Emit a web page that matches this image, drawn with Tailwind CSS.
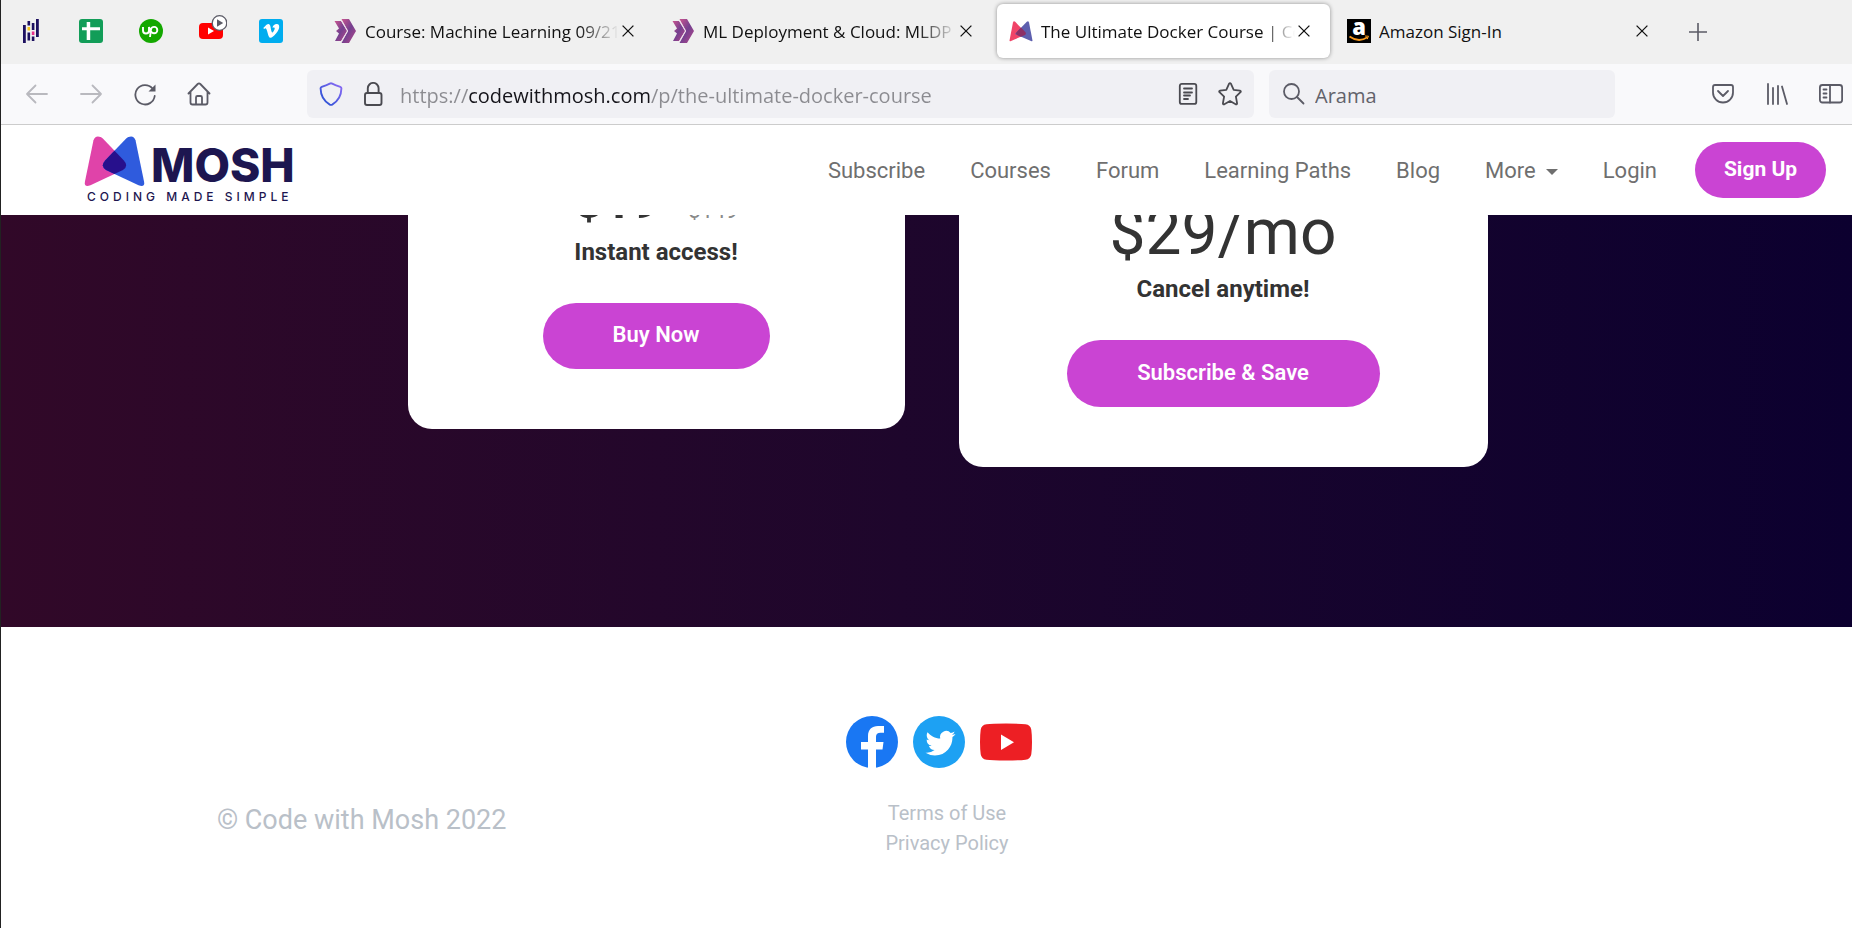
<!DOCTYPE html>
<html lang="en">
<head>
<meta charset="utf-8">
<title>The Ultimate Docker Course | Code with Mosh</title>
<script src="https://cdn.jsdelivr.net/npm/@tailwindcss/browser@4"></script>
</head>
<body class="min-h-screen overflow-x-hidden border-l border-[#222] bg-white font-['Roboto',sans-serif]">

<!-- shared symbols -->
<svg class="absolute size-0" aria-hidden="true">
  <linearGradient id="cg" x1="0" y1="0" x2="1" y2="1"><stop offset="0" stop-color="#c9558f"/><stop offset=".5" stop-color="#74408f"/><stop offset="1" stop-color="#b8478a"/></linearGradient>
  <symbol id="close" viewBox="0 0 12 12"><path d="M.6.6l10.800 10.800M11.400.6L.6 11.400" fill="none" stroke="#111" stroke-width="1.300"/></symbol>
  <symbol id="chevrons" viewBox="0 0 24 24">
    <path d="M8.500 0H16l7 12-7 12H8.500l6.500-12z" fill="url(#cg)"/>
    <path d="M1.500 2H8l6 10-6 10H2l4-7.500L3 12l3-2.500z" fill="url(#cg)"/>
    <path d="M8.300 1.500L14.700 12 8.300 22.500" fill="none" stroke="#efd9e8" stroke-width=".9"/>
  </symbol>
</svg>

<!-- tab strip -->
<div class="flex h-16 items-start bg-[#f0f0f0] pt-1 font-['Open_Sans',sans-serif] text-[17px] text-[#111]">
  <div class="mr-5 flex h-[54px] shrink-0 items-center">
    <button class="flex w-15 justify-center" aria-label="pandas">
      <svg class="size-6" viewBox="0 0 24 24"><g fill="#1d1060"><path d="M4 6h2.800v18H4zM17 0h2.800v18H17zM8.500 2h2.600v4.500H8.500zM8.500 13.500h2.600v8H8.500zM12.800 4h2.600v7h-2.600zM12.800 17.500h2.600V22h-2.600z"/></g><path fill="#f5c518" d="M8.500 8h2.600v3.500H8.500z"/><path fill="#e6308a" d="M12.800 12.500h2.600V16h-2.600z"/></svg>
    </button>
    <button class="flex w-15 justify-center" aria-label="Sheets">
      <svg class="size-6" viewBox="0 0 24 24"><rect width="24" height="24" rx="3" fill="#129d58"/><path d="M3 8.200h18v3H3zM7.700 3h3.500v18H7.700z" fill="#fff"/></svg>
    </button>
    <button class="flex w-15 justify-center" aria-label="Upwork">
      <svg class="size-6" viewBox="0 0 24 24"><circle cx="12" cy="12" r="12" fill="#14a800"/><path d="M4 8v3.500a3 3 0 0 0 6 0V8c.8 3 2.400 6 5 6.300a3.200 3.200 0 1 0-3.100-3.300L11 18" fill="none" stroke="#fff" stroke-width="1.900"/></svg>
    </button>
    <button class="flex w-15 justify-center" aria-label="YouTube, playing">
      <svg class="size-8" viewBox="0 0 32 32"><rect x="4" y="8" width="24" height="16" rx="4" fill="#f00"/><path d="M13 12.500v7l6-3.500z" fill="#fff"/><circle cx="24.500" cy="8" r="7.300" fill="#fff" stroke="#5b5b66" stroke-width="1.300"/><path d="M22 4.300v7.400l6.200-3.700z" fill="#5b5b66"/></svg>
    </button>
    <button class="flex w-15 justify-center" aria-label="Vimeo">
      <svg class="size-6" viewBox="0 0 24 24"><rect width="24" height="24" rx="3" fill="#00adef"/><path d="M4.300 8.900l.8 1c.7-.5 1.100-.7 1.400-.7.600 0 1 .9 1.600 2.900l1.100 3.800c.6 1.900 1.300 2.800 2.300 2.800 1.500 0 3.400-1.500 5.500-4.200 2.100-2.700 3.100-4.800 3.200-6.300.1-2.100-.7-3.100-2.300-3.200-2.200-.1-3.700 1.200-4.500 3.700.4-.2.800-.3 1.200-.3.800 0 1.200.5 1.100 1.300-.1.500-.4 1.200-1 2.200-.700 1-1.100 1.500-1.400 1.500-.5 0-.8-.8-1.200-2.400l-.6-3.300c-.400-1.900-1.100-2.700-2.300-2.600-.7.1-1.600.6-2.900 1.800z" fill="#fff"/></svg>
    </button>
  </div>

  <div class="flex min-w-0 gap-[5px]" role="tablist">
    <div role="tab" class="flex h-[54px] w-[333px] items-center pr-5 pl-3">
      <svg class="size-6 shrink-0"><use href="#chevrons"/></svg>
      <span class="mr-[3px] ml-2 flex-1 overflow-hidden pt-px whitespace-nowrap [mask-image:linear-gradient(90deg,#000_calc(100%-40px),transparent)]">Course: Machine Learning 09/21</span>
      <button aria-label="Close tab"><svg class="size-3"><use href="#close"/></svg></button>
    </div>
    <div role="tab" class="flex h-[54px] w-[333px] items-center pr-5 pl-3">
      <svg class="size-6 shrink-0"><use href="#chevrons"/></svg>
      <span class="mr-[3px] ml-2 flex-1 overflow-hidden pt-px whitespace-nowrap [mask-image:linear-gradient(90deg,#000_calc(100%-40px),transparent)]">ML Deployment &amp; Cloud: MLDP</span>
      <button aria-label="Close tab"><svg class="size-3"><use href="#close"/></svg></button>
    </div>
    <div role="tab" aria-selected="true" class="flex h-[54px] w-[333px] items-center rounded-md bg-white pr-5 pl-3 shadow-[0_0_4px_rgba(0,0,0,0.4)]">
      <svg class="size-6 shrink-0" viewBox="0 0 24 24"><path d="M.5 21.500L4 3.500q.6-2 2.200-.7L18 15 2 22q-1.600.6-1.500-.5z" fill="#f04468"/><path d="M23.500 21.500L20 3.500q-.6-2-2.200-.7L6 15l16 7q1.600.6 1.500-.5z" fill="#5d5fae"/><path d="M12 8.500L7.500 13.200q-1 2 .6 2.800L12 17.700l4-1.700q1.500-.8.500-2.800z" fill="#8c2f66"/></svg>
      <span class="mr-[3px] ml-2 flex-1 overflow-hidden pt-px whitespace-nowrap [mask-image:linear-gradient(90deg,#000_calc(100%-32px),transparent)]">The Ultimate Docker Course | Co</span>
      <button aria-label="Close tab"><svg class="size-3"><use href="#close"/></svg></button>
    </div>
    <div role="tab" class="flex h-[54px] w-[333px] items-center pr-5 pl-3">
      <svg class="size-6 shrink-0" viewBox="0 0 24 24"><rect width="24" height="24"/><text x="12" y="16" text-anchor="middle" font-family="Open Sans" font-weight="800" font-size="22" fill="#fff">a</text><path d="M2.500 17.500q9 6.500 18 .8" fill="none" stroke="#f7981d" stroke-width="1.800"/><path d="M18 17l3.500.2-1.300 3" fill="none" stroke="#f7981d"/></svg>
      <span class="mr-[3px] ml-2 flex-1 overflow-hidden pt-px whitespace-nowrap">Amazon Sign-In</span>
      <button aria-label="Close tab"><svg class="size-3"><use href="#close"/></svg></button>
    </div>
  </div>
  <button class="ml-[21px] flex h-14 items-center" aria-label="New tab"><svg class="size-[18px]" viewBox="0 0 18 18"><path d="M9 0v18M0 9h18" stroke="#5b5b66" stroke-width="1.600"/></svg></button>
</div>

<!-- toolbar -->
<div class="flex h-[61px] items-center border-b border-[#ccc] bg-[#f9f9fb] px-[9px] font-['Open_Sans',sans-serif] text-[20px]">
  <button class="flex w-[54px] shrink-0 justify-center" aria-label="Back"><svg class="size-6" viewBox="0 0 24 24" fill="none" stroke="#b9b9be" stroke-width="1.800" stroke-linecap="round" stroke-linejoin="round"><path d="M22 12H2M10.500 3.500L2 12l8.500 8.500"/></svg></button>
  <button class="flex w-[54px] shrink-0 justify-center" aria-label="Forward"><svg class="size-6" viewBox="0 0 24 24" fill="none" stroke="#b9b9be" stroke-width="1.800" stroke-linecap="round" stroke-linejoin="round"><path d="M2 12h20M13.500 3.500L22 12l-8.500 8.500"/></svg></button>
  <button class="flex w-[54px] shrink-0 justify-center" aria-label="Reload"><svg class="size-6" viewBox="0 0 24 24"><path d="M19.500 6.500A9.700 9.700 0 1 0 21.700 14" fill="none" stroke="#5b5b66" stroke-width="1.800" stroke-linecap="round"/><path d="M22.500 2.500v7h-7z" fill="#5b5b66"/></svg></button>
  <button class="flex w-[54px] shrink-0 justify-center" aria-label="Home"><svg class="size-6" viewBox="0 0 24 24" fill="none" stroke="#5b5b66" stroke-width="1.800" stroke-linecap="round" stroke-linejoin="round"><path d="M1.500 11.500L10.700 2q1.300-1.200 2.600 0l9.200 9.500M3.500 10v10.500q0 2 2 2h13q2 0 2-2V10M9 22v-6.500q0-1.500 1.500-1.500h3q1.500 0 1.500 1.500V22"/></svg></button>

  <div class="ml-[81px] flex h-12 min-w-0 flex-1 items-center rounded-md bg-[#f0f0f4] px-3">
    <svg class="size-6 shrink-0" viewBox="0 0 24 24"><linearGradient id="sh" x1="0" y1="1" x2="1" y2="0"><stop offset="0" stop-color="#1f4fd0"/><stop offset="1" stop-color="#8f6bf5"/></linearGradient><path d="M12 1.200q.8 0 4.500 1.900l4.800 1.700q1.200.5 1.100 1.800-.2 10.900-9.200 16-1.200.6-2.400 0-9-5.100-9.200-16-.1-1.300 1.100-1.800l4.800-1.700Q11.200 1.200 12 1.200z" fill="none" stroke="url(#sh)" stroke-width="1.900"/></svg>
    <svg class="ml-[18px] size-6 shrink-0" viewBox="0 0 24 24" fill="none" stroke="#4a4a50" stroke-width="1.900"><rect x="4" y="11" width="16.500" height="12" rx="2"/><path d="M6.800 11V6.300a5.400 5.400 0 0 1 10.800 0V11"/></svg>
    <input aria-label="Address" value="https://codewithmosh.com/p/the-ultimate-docker-course" class="ml-[15px] min-w-0 flex-1 bg-[linear-gradient(90deg,#8b8b90_69px,#15141a_69px,#15141a_250px,#8b8b90_250px)] bg-clip-text pt-[3px] text-transparent outline-none">
    <button aria-label="Reader view"><svg class="size-6" viewBox="0 0 24 24" fill="none" stroke="#4a4a50" stroke-width="1.800" stroke-linecap="round"><rect x="3.800" y="1.900" width="16.500" height="20" rx="2"/><path d="M8 6.500h8M8 10.500h8M8 13.500h6M8 17h4"/></svg></button>
    <button class="ml-[18px]" aria-label="Bookmark"><svg class="size-6" viewBox="0 0 24 24" fill="none" stroke="#4a4a50" stroke-width="1.800" stroke-linejoin="round"><path d="M11 1.800q1-1.300 2 0l2.700 6 6.200.8q1.500.4.600 1.600l-4.600 4.500 1.200 6.600q0 1.500-1.400 1L12 19l-5.700 3.300q-1.400.5-1.400-1l1.200-6.600L1.500 10.200q-.9-1.200.600-1.600l6.200-.8z"/></svg></button>
  </div>

  <div class="ml-[15px] flex h-12 w-[346px] shrink-0 items-center rounded-md bg-[#f0f0f4] px-3">
    <svg class="size-6 shrink-0" viewBox="0 0 24 24" fill="none" stroke="#5b5b66" stroke-width="1.800" stroke-linecap="round"><circle cx="10.500" cy="9.500" r="7.500"/><path d="M16 15l6.500 6.500"/></svg>
    <input aria-label="Search" placeholder="Arama" class="ml-[10px] min-w-0 flex-1 bg-transparent pt-[3px] outline-none placeholder:text-[#62626b]">
  </div>

  <div class="ml-24 flex shrink-0 gap-[30px]">
    <button aria-label="Pocket"><svg class="size-6" viewBox="0 0 24 24" fill="none" stroke="#5b5b66" stroke-width="1.800" stroke-linecap="round" stroke-linejoin="round"><path d="M4 3h16q2 0 2 2v5.500a10 10 0 0 1-20 0V5q0-2 2-2zM7 9l5 5 5-5"/></svg></button>
    <button aria-label="Library"><svg class="size-6" viewBox="0 0 24 24" fill="none" stroke="#5b5b66" stroke-width="1.800" stroke-linecap="round"><path d="M3 2v20M8 6v16M13 4v18M17 4.500L22 22"/></svg></button>
    <button aria-label="Sidebars"><svg class="size-6" viewBox="0 0 24 24" fill="none" stroke="#5b5b66" stroke-width="1.800" stroke-linecap="round"><rect x=".9" y="3" width="22.200" height="17.500" rx="2.500"/><path d="M11 3v17.500M4.500 7.500h3M4.500 11.500h3M4.500 15.500h3"/></svg></button>
  </div>
</div>

<!-- site header -->
<header class="flex h-[90px] items-center bg-white pr-[26px] pl-[83px]">
  <a href="#" class="flex flex-col pt-[2px] font-['Inter',sans-serif] text-[#1d1650]">
    <span class="flex h-[52px] items-center gap-[6px]">
      <svg class="h-[52px] w-[61px]" viewBox="43 32 180 157" preserveAspectRatio="none" aria-hidden="true">
        <defs><path id="peak" d="M46 172L71 48Q76 32 92 38Q96 40 100 44L160 108Q176 126 158 138L62 184Q42 192 46 172Z"/><clipPath id="pc"><use href="#peak"/></clipPath></defs>
        <use href="#peak" fill="#e043a9"/>
        <use href="#peak" fill="#2f5bdd" transform="matrix(-1 0 0 1 266 0)"/>
        <g clip-path="url(#pc)"><use href="#peak" fill="#27108c" transform="matrix(-1 0 0 1 266 0)"/></g>
      </svg>
      <span class="pt-2 text-[46px] leading-[44px] font-extrabold">MOSH</span>
    </span>
    <span class="pl-[3px] text-[12px] leading-[20px] font-medium tracking-[4px]">CODING MADE SIMPLE</span>
  </a>
  <nav class="ml-auto flex items-center gap-[45px] text-[22px] whitespace-nowrap text-[#6f6f6f]">
    <a href="#">Subscribe</a>
    <a href="#">Courses</a>
    <a href="#">Forum</a>
    <a href="#">Learning Paths</a>
    <a href="#">Blog</a>
    <a href="#" class="flex items-center gap-[10px]">More <span class="mt-1 border-x-6 border-t-6 border-x-transparent border-t-[#6f6f6f]"></span></a>
    <a href="#">Login</a>
  </nav>
  <a href="#" class="ml-[38px] flex h-14 w-[131px] items-center justify-center rounded-full bg-[#ca44d3] text-[21px] font-bold text-white">Sign Up</a>
</header>

<!-- pricing -->
<main class="flex items-start justify-center gap-[54px] overflow-hidden bg-linear-to-r from-[#310828] to-[#0c002f] pb-40 pl-[42px] text-center text-[#333]">
  <section class="-mt-[49px] w-[497px] rounded-3xl bg-white pb-15">
    <p class="text-[50px] leading-[70px] font-bold">$19<s class="ml-7 text-[22px] leading-none font-normal text-[#8a8a8a]">$149</s></p>
    <p class="text-[24px] leading-8 font-bold">Instant access!</p>
    <button class="mt-[35px] h-[66px] w-[227px] rounded-full bg-[#ca44d3] pb-[3px] text-[22px] font-semibold text-white">Buy Now</button>
  </section>
  <section class="-mt-[22px] w-[529px] rounded-3xl bg-white pb-15">
    <p class="text-[64px] leading-[80px]">$29/mo</p>
    <p class="text-[24px] leading-8 font-bold">Cancel anytime!</p>
    <button class="mt-[35px] h-[67px] w-[313px] rounded-full bg-[#ca44d3] pb-[3px] text-[22px] font-semibold text-white">Subscribe &amp; Save</button>
  </section>
</main>

<footer class="grid grid-cols-3 bg-white pt-[89px] pr-[27px] pb-10 pl-[68px] text-center text-[#b9c0c8]">
  <p class="pt-[86px] text-[27px] leading-9">© Code with Mosh 2022</p>
  <div>
    <div class="flex justify-center gap-[15px] pr-[15px]">
      <a href="#" aria-label="Facebook"><svg class="size-[52px]" viewBox="0 0 52 52"><circle cx="26" cy="26" r="26" fill="#1977f3"/><path fill="#fff" d="M22 52V33.500h-7V26h7v-6c0-6.500 4-10 10-10h6v6.700h-3.500c-3 0-4.500 1.500-4.500 4V26h7.500l-1 7.500H30V52z"/></svg></a>
      <a href="#" aria-label="Twitter"><svg class="size-[52px]" viewBox="0 0 52 52"><circle cx="26" cy="26" r="26" fill="#1da1f3"/><path fill="#fff" transform="translate(12.500 12.200) scale(1.250)" d="M23.953 4.570a10 10 0 01-2.825.775 4.958 4.958 0 002.163-2.723c-.951.555-2.005.959-3.127 1.184a4.920 4.920 0 00-8.384 4.482C7.690 8.095 4.067 6.130 1.640 3.162a4.822 4.822 0 00-.666 2.475c0 1.710.870 3.213 2.188 4.096a4.904 4.904 0 01-2.228-.616v.060a4.923 4.923 0 003.946 4.827 4.996 4.996 0 01-2.212.085 4.936 4.936 0 004.604 3.417 9.867 9.867 0 01-6.102 2.105c-.390 0-.779-.023-1.170-.067a13.995 13.995 0 007.557 2.209c9.053 0 13.998-7.496 13.998-13.985 0-.210 0-.420-.015-.630A9.935 9.935 0 0024 4.590z"/></svg></a>
      <a href="#" aria-label="YouTube"><svg class="size-[52px]" viewBox="0 0 52 52"><path fill="#ed1f24" d="M26 7.500q14 0 19.500.8 5 .7 5.800 5.500.7 5 .7 12.200t-.7 12.200q-.8 4.800-5.800 5.500-5.500.8-19.500.8t-19.500-.8q-5-.7-5.800-5.500Q0 33.200 0 26t.7-12.200q.8-4.800 5.800-5.500Q12 7.500 26 7.500z"/><path d="M21 18.500v15.500l13-7.700z" fill="#fff"/></svg></a>
    </div>
    <ul class="mt-[30px] text-[20px] leading-[30px]">
      <li><a href="#">Terms of Use</a></li>
      <li><a href="#">Privacy Policy</a></li>
    </ul>
  </div>
</footer>
</body>
</html>
